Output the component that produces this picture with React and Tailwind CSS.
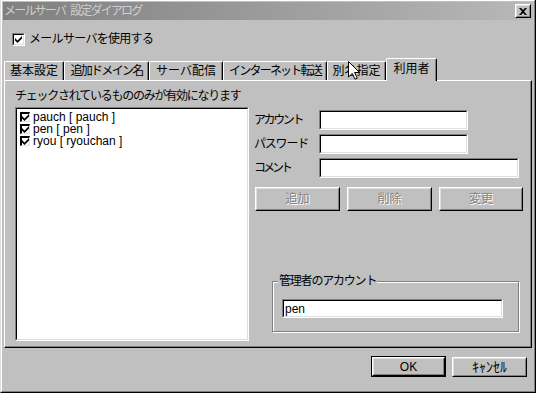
import React from 'react';

// 3D枠のクラス (Windows クラシック風)
const raisedOuter = 'border border-t-white border-l-white border-r-black border-b-black';
const raisedInner = 'border border-t-[#dfdfdf] border-l-[#dfdfdf] border-r-[#808080] border-b-[#808080]';
const sunkenOuter = 'border border-t-[#808080] border-l-[#808080] border-r-white border-b-white';
const sunkenInner = 'border border-t-black border-l-black border-r-[#dfdfdf] border-b-[#dfdfdf]';

const Check = () => (
  <svg width="7" height="7" viewBox="0 0 7 7" className="block">
    <path d="M0 2L2.5 4.5L7 0V2.5L2.5 7L0 4.5Z" fill="#000" />
  </svg>
);

const CheckBox = () => (
  <span className={`block w-[13px] h-[13px] ${sunkenOuter}`}>
    <span className={`flex w-full h-full items-center justify-center bg-white ${sunkenInner}`}>
      <Check />
    </span>
  </span>
);

const ListCheck = () => (
  <span className="flex w-[10px] h-[10px] shrink-0 items-center justify-center bg-white border-t-2 border-l-2 border-r border-b border-t-black border-l-black border-r-[#dfdfdf] border-b-[#dfdfdf]">
    <Check />
  </span>
);

const Field = ({ width, height = 'h-[20px]', children }) => (
  <div className={`${width} ${height} ${sunkenOuter}`}>
    <div className={`w-full h-full bg-white pl-[1px] flex items-center ${sunkenInner}`}>{children}</div>
  </div>
);

const Button = ({ width, height = 'h-[24px]', disabled, children, extra = '' }) => (
  <div className={`${width} ${height} ${raisedOuter}`}>
    <div
      className={`w-full h-full flex items-center justify-center ${raisedInner} ${extra} ${
        disabled ? 'text-[#808080] [text-shadow:1px_1px_0_#fff]' : 'text-black'
      }`}
    >
      {children}
    </div>
  </div>
);

const Tab = ({ width, tracking = '', children }) => (
  <div
    className={`${width} h-[19px] flex items-center justify-center rounded-t-[2px] border-t border-l border-r border-t-white border-l-white border-r-black shadow-[inset_-1px_0_#808080] ${tracking}`}
  >
    {children}
  </div>
);

const users = ['pauch [ pauch ]', 'pen [ pen ]', 'ryou [ ryouchan ]'];

export default function App() {
  return (
    <div className="relative w-[536px] h-[393px] overflow-hidden bg-[#c0c0c0] text-[12px] leading-[14px] text-black font-['Liberation_Sans','Noto_Sans_CJK_JP',sans-serif]">
      <div className="h-full border-r border-b border-l border-r-black border-b-black border-l-[#dfdfdf]">
        <div className="flex h-full flex-col border border-t-white border-l-white border-r-[#808080] border-b-[#808080] px-[1px] pt-[1px] pb-[1px]">
          {/* タイトルバー */}
          <div className="h-[18px] flex items-center justify-between bg-linear-to-r from-[#808080] to-[#b8b8b8] pl-[1px] pr-[2px]">
            <div className="flex text-[#cfcfcf] tracking-[-1.8px]">
              <span>メールサーバ</span>
              <span className="ml-[5px]">設定ダイアログ</span>
            </div>
            <div className={`w-[16px] h-[14px] ${raisedOuter}`}>
              <div className={`w-full h-full flex items-center justify-center bg-[#c0c0c0] ${raisedInner}`}>
                <svg width="8" height="7" viewBox="0 0 8 7" className="block">
                  <path d="M0 0H2L4 2L6 0H8L5 3.5L8 7H6L4 5L2 7H0L3 3.5Z" fill="#000" />
                </svg>
              </div>
            </div>
          </div>

          {/* 使用チェック */}
          <div className="mt-[12px] h-[14px] flex items-center gap-[4px] pl-[9px]">
            <CheckBox />
            <span className="tracking-[-0.7px]">メールサーバを使用する</span>
          </div>

          {/* タブ */}
          <div className="mt-[12px] ml-[1px] h-[22px] flex items-end">
            <Tab width="w-[60px]">基本設定</Tab>
            <Tab width="w-[85px]" tracking="tracking-[-1.7px]">追加ドメイン名</Tab>
            <Tab width="w-[74px]">サーバ配信</Tab>
            <Tab width="w-[104px]" tracking="tracking-[-1.8px]">インターネット転送</Tab>
            <Tab width="w-[59px]">別名指定</Tab>
            <div className="relative z-10 w-[51px] h-[23px] -mb-[1px] flex justify-center pt-[3px] bg-[#c0c0c0] rounded-t-[2px] border-t border-l border-r border-t-white border-l-white border-r-black shadow-[inset_-1px_0_#808080]">
              利用者
            </div>
          </div>

          {/* タブパネル */}
          <div className="mx-[1px] h-[268px] flex flex-col pt-[8px] pl-[10px] border border-t-white border-l-white border-r-black border-b-black shadow-[inset_-1px_-1px_#808080]">
            <div className="tracking-[-1.25px]">チェックされているもののみが有効になります</div>
            <div className="mt-[4px] flex">
              <div className={`w-[234px] h-[234px] ${sunkenOuter}`}>
                <div className={`w-full h-full bg-white pt-[2px] pl-[3px] ${sunkenInner}`}>
                  {users.map((u) => (
                    <div key={u} className="h-[12px] flex items-center gap-[3px] leading-[12px]">
                      <ListCheck />
                      <span>{u}</span>
                    </div>
                  ))}
                </div>
              </div>

              <div className="ml-[5px] mt-[3px] flex flex-col">
                <div className="flex flex-col gap-[4px]">
                  <div className="flex items-center">
                    <span className="w-[65px] tracking-[-2.4px]">アカウント</span>
                    <Field width="w-[149px]" />
                  </div>
                  <div className="flex items-center">
                    <span className="w-[65px] tracking-[-1.2px]">パスワード</span>
                    <Field width="w-[149px]" />
                  </div>
                  <div className="flex items-center">
                    <span className="w-[65px] tracking-[-3px]">コメント</span>
                    <Field width="w-[200px]" />
                  </div>
                </div>

                <div className="mt-[9px] ml-[1px] flex gap-[7px]">
                  <Button width="w-[85px]" disabled>追加</Button>
                  <Button width="w-[85px]" disabled>削除</Button>
                  <Button width="w-[84px]" disabled>変更</Button>
                </div>

                {/* 管理者グループ */}
                <div className="relative ml-[18px] mt-[70px] w-[247px] h-[51px] border border-[#808080] shadow-[inset_1px_1px_#fff,1px_1px_#fff] pl-[9px] pt-[17px]">
                  <span className="absolute -top-[8px] left-[5px] px-[1px] bg-[#c0c0c0] tracking-[-1.2px]">管理者のアカウント</span>
                  <Field width="w-[221px]" height="h-[19px]">pen</Field>
                </div>
              </div>
            </div>
          </div>

          {/* OK / キャンセル */}
          <div className="mt-[8px] flex items-start justify-end gap-[6px] pr-[6px]">
            <div className="w-[75px] h-[21px] border border-black">
              <Button width="w-full" height="h-full">OK</Button>
            </div>
            <div className="mt-[1px]">
              <Button width="w-[75px]" height="h-[20px]" extra="text-[14px] leading-[16px]">ｷｬﾝｾﾙ</Button>
            </div>
          </div>
        </div>
      </div>

      {/* マウスカーソル */}
      <svg width="12" height="19" viewBox="0 0 12 19" className="absolute left-[348px] top-[61px] z-20">
        <path d="M0.5 0.5V16L4.3 12.4L7 18.2L9.3 17.2L6.6 11.5H11.5Z" fill="#fff" stroke="#000" strokeWidth="1" />
      </svg>
    </div>
  );
}
